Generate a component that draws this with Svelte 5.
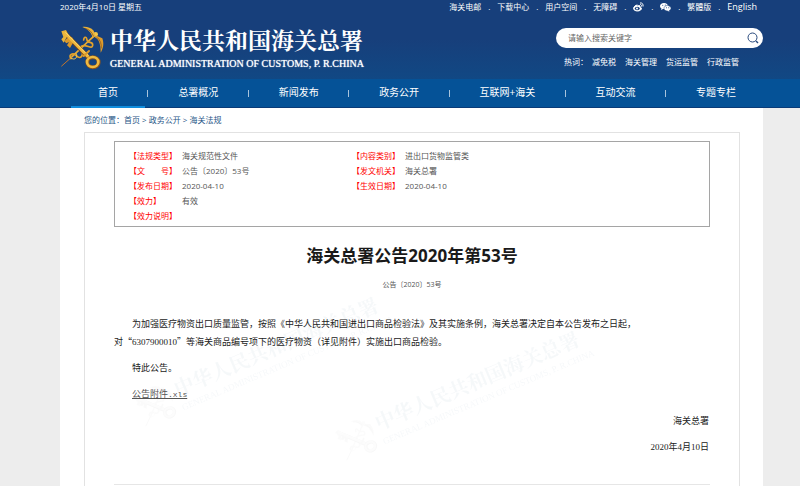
<script lang="ts">
	const navItems = ['首页', '总署概况', '新闻发布', '政务公开', '互联网+海关', '互动交流', '专题专栏'];
	const hotWords = ['减免税', '海关管理', '货运监管', '行政监管'];
	const crumbs = ['首页', '政务公开', '海关法规'];

	const info = [
		['【法规类型】', '海关规范性文件', '【内容类别】', '进出口货物监管类'],
		['【文　　号】', '公告〔2020〕53号', '【发文机关】', '海关总署'],
		['【发布日期】', '2020-04-10', '【生效日期】', '2020-04-10'],
		['【效力】', '有效', '', ''],
		['【效力说明】', '', '', '']
	];

	let keyword = $state('');
</script>

{#snippet emblem()}
	<svg class="emblem" viewBox="20 18 132 132" aria-hidden="true" fill="none" stroke-linecap="round">
		<!-- caduceus -->
		<path d="M25 138 L60 107" stroke="#c4762c" stroke-width="3" />
		<path d="M56 110 L124 46" stroke="#e6aa35" stroke-width="5" />
		<path
			d="M53 116 C45 105 58 97 66 105 S84 117 87 104 S72 84 86 78 S116 90 118 76 S103 72 101 60 S92 50 91 60"
			stroke="#e3a22c"
			stroke-width="5"
		/>
		<path d="M53 114 C64 123 75 112 69 101" stroke="#f5cb55" stroke-width="3" />
		<circle cx="127" cy="43" r="7" fill="#f3c64c" />
		<path d="M118 53 C114 38 106 29 87 21 C98 19 112 22 121 32 L127 49 Z" fill="#e9b23b" />
		<path d="M124 52 C136 56 142 71 142 98 C151 85 152 68 147 55 L130 47 Z" fill="#dd9c2d" />
		<path d="M96 25 C109 29 116 36 120 48 M132 53 C141 60 145 72 144 84" stroke="#7c4c1e" stroke-width="2" />
		<!-- key -->
		<path d="M36 41 L104 111" stroke="#7a461b" stroke-width="13" />
		<path d="M24 34 L38 30 L46 46 L40 52 L31 68 L24 58 L30 51 Z" fill="#eab43a" />
		<path d="M41 55 L56 52 L62 63 L50 84 L41 76 L47 66 L39 70 L33 64 Z" fill="#dc992b" />
		<path d="M35 39 L104 110" stroke="#edb83e" stroke-width="9" />
		<path d="M37 38 L104 106" stroke="#ffe58a" stroke-width="2" />
		<path d="M91 108 L107 93" stroke="#d99a2c" stroke-width="6" />
		<ellipse cx="119" cy="127" rx="17" ry="15" stroke="#8a531d" stroke-width="12" />
		<ellipse cx="118" cy="126" rx="17" ry="15" stroke="#efbb42" stroke-width="8" />
	</svg>
{/snippet}

{#snippet brand()}
	{@render emblem()}
	<span class="names">
		<span class="cn">中华人民共和国海关总署</span>
		<span class="en">GENERAL ADMINISTRATION OF CUSTOMS, P. R.CHINA</span>
	</span>
{/snippet}

<div class="page" lang="zh-CN">
	<header>
		<div class="wrap">
			<div class="topbar">
				<span>2020年4月10日 星期五</span>
				<ul class="links">
					<li><a href="#mail">海关电邮</a></li>
					<li><a href="#download">下载中心</a></li>
					<li><a href="#user">用户空间</a></li>
					<li><a href="#access">无障碍</a></li>
					<li>
						<a href="#weibo" aria-label="微博">
							<svg viewBox="0 0 22 20" fill="none" stroke="currentColor" stroke-width="2">
								<path d="M9 6 C5 6 1 10 1 13 C1 16 5 18 9 18 C14 18 17 15 17 13 C17 11 15 11 14 10 C15 7 12 6 9 8" fill="#fff" />
								<ellipse cx="8.5" cy="13" rx="5" ry="3.5" fill="#173f7b" stroke="none" />
								<circle cx="8" cy="13" r="2" fill="#fff" stroke="none" />
								<path d="M14 2 C18 1 21 4 20 9 M14 5 C16 5 18 6 17 9" />
							</svg>
						</a>
					</li>
					<li>
						<a href="#wechat" aria-label="微信">
							<svg viewBox="0 0 22 20" fill="currentColor">
								<path d="M8 2 C3 2 0 5 0 8 C0 10 1 12 3 13 L2 16 L6 14 C14 15 16 11 16 8 C16 5 13 2 8 2" />
								<path
									d="M15 7 C10 7 8 10 8 12.500 C8 16 11 18 15 18 L19 20 L18.500 17 C21 16 22 14 22 12.500 C22 10 19 7 15 7"
									stroke="#173f7b"
								/>
								<g fill="#173f7b">
									<circle cx="5.500" cy="6.500" r="1" />
									<circle cx="10.500" cy="6" r="1" />
									<circle cx="13" cy="11.500" r="1" />
									<circle cx="17.500" cy="11.500" r="1" />
								</g>
							</svg>
						</a>
					</li>
					<li><a href="#traditional">繁體版</a></li>
					<li><a class="latin" href="#english">English</a></li>
				</ul>
			</div>
			<div class="masthead">
				<a class="brand" href="#home">{@render brand()}</a>
				<div class="tools">
					<form class="search" onsubmit={(e) => e.preventDefault()}>
						<input type="text" aria-label="搜索" placeholder="请输入搜索关键字" bind:value={keyword} />
						<button type="submit" aria-label="搜索">
							<svg viewBox="0 0 12 12" fill="none" stroke="#28497d">
								<circle cx="5.500" cy="5.500" r="4.500" />
								<path d="M9 9 L11 11" stroke-width="1.500" />
							</svg>
						</button>
					</form>
					<p class="hot">
						<span>热词：</span>
						{#each hotWords as word (word)}
							<a href="#search">{word}</a>
						{/each}
					</p>
				</div>
			</div>
		</div>
	</header>

	<nav>
		<ul class="wrap">
			{#each navItems as item, i (item)}
				<li><a href="#nav" class:active={i === 0}>{item}</a></li>
			{/each}
		</ul>
	</nav>

	<main class="wrap">
		<p class="crumbs">
			您的位置：{#each crumbs as crumb, i (crumb)}{i ? ' > ' : ''}<a href="#crumb">{crumb}</a>{/each}
		</p>
		<article>
			<div class="mark first" aria-hidden="true">{@render brand()}</div>
			<div class="mark second" aria-hidden="true">{@render brand()}</div>

			<div class="info">
				<table>
					<tbody>
						{#each info as [label, value, label2, value2] (label)}
							<tr>
								<th scope="row">{label}</th>
								<td>{value}</td>
								<th scope="row">{label2}</th>
								<td>{value2}</td>
							</tr>
						{/each}
					</tbody>
				</table>
			</div>

			<h1>海关总署公告2020年第53号</h1>
			<p class="number">公告〔2020〕53号</p>

			<div class="body">
				<p>
					为加强医疗物资出口质量监管，按照《中华人民共和国进出口商品检验法》及其实施条例，海关总署决定自本公告发布之日起，<br />对“<span class="num">6307900010</span>”等海关商品编号项下的医疗物资（详见附件）实施出口商品检验。
				</p>
				<p>特此公告。</p>
				<p><a href="#attachment">公告附件<span class="ext">.xls</span></a></p>
				<p class="sign">海关总署</p>
				<p class="sign"><span class="num">2020</span>年<span class="num">4</span>月<span class="num">10</span>日</p>
			</div>
			<hr />
		</article>
	</main>
</div>

<style>
	:global(body) {
		margin: 0;
		background: #ededed;
	}

	.page {
		min-height: 100vh;
		display: flex;
		flex-direction: column;
		overflow: hidden;
		font: 8px/12px 'Open Sans', 'Noto Sans CJK SC', sans-serif;
		color: #555;
	}

	.wrap {
		margin: 0 37px 0 60px;
	}

	ul {
		list-style: none;
		padding: 0;
		margin: 0;
	}

	p {
		margin: 0;
	}

	a {
		color: inherit;
		text-decoration: none;
	}

	header {
		background: linear-gradient(#173f7b 50%, #114884);
		color: #fff;
		padding-bottom: 8px;
	}

	.topbar {
		display: flex;
		justify-content: space-between;
		align-items: center;
		height: 14px;
		padding-right: 6px;
	}

	.links {
		display: flex;
	}

	.links li {
		display: flex;
		align-items: center;
	}

	.links li + li::before {
		content: '.';
		width: 16px;
		text-align: center;
	}

	.links svg {
		display: block;
		width: 11px;
		height: 10px;
	}

	.latin {
		font-size: 9px;
	}

	.masthead {
		display: flex;
		justify-content: space-between;
		padding-top: 12px;
	}

	.brand {
		display: flex;
		gap: 6px;
		color: #fff;
		height: 45px;
	}

	.emblem {
		width: 44px;
		height: 44px;
		flex: none;
	}

	.names {
		display: flex;
		flex-direction: column;
		white-space: nowrap;
	}

	.cn {
		font: 700 23px/28px 'Noto Serif CJK SC', 'Noto Sans CJK SC', serif;
	}

	.en {
		font: 400 10px/20px 'Liberation Serif', serif;
		text-shadow: 0 0 1px #fff;
	}

	.tools {
		width: 207px;
		padding-top: 2px;
	}

	.search {
		display: flex;
		align-items: center;
		height: 20px;
		padding: 0 4px 0 12px;
		background: #fff;
		border-radius: 10px;
	}

	.search input {
		flex: 1;
		min-width: 0;
		padding: 0;
		border: 0;
		outline: 0;
		background: none;
		font: inherit;
		color: #555;
	}

	.search input::placeholder {
		color: #666;
	}

	.search button {
		display: flex;
		padding: 0;
		border: 0;
		background: none;
	}

	.search svg {
		width: 12px;
		height: 12px;
	}

	.hot {
		display: flex;
		gap: 9px;
		margin: 8px 0 0 8px;
	}

	.hot span {
		margin-right: -5px;
	}

	nav {
		background: #055297;
		box-shadow: inset 0 -1px #0a3b78;
		color: #fff;
		font-size: 10px;
	}

	nav ul {
		display: flex;
		justify-content: space-between;
		padding-left: 11px;
	}

	nav li {
		display: flex;
		align-items: center;
	}

	nav li + li::before {
		content: '';
		width: 1px;
		height: 7px;
		margin-right: 3px;
		background: #a9c4dc;
	}

	nav a {
		padding: 0 27px;
		line-height: 27px;
		border-bottom: 2px solid transparent;
		white-space: nowrap;
	}

	nav a.active {
		border-color: #118ddd;
	}

	main {
		flex: 1;
		display: flex;
		flex-direction: column;
		padding: 0 23px 0 24px;
		background: #fff;
	}

	.crumbs {
		line-height: 24px;
		color: #1f5687;
	}

	article {
		position: relative;
		flex: 1;
		padding: 8px 29px 0;
		border: 1px solid #e2e2e2;
		border-bottom: 0;
		z-index: 0;
	}

	.mark {
		position: absolute;
		z-index: -1;
		display: flex;
		gap: 4px;
		color: #2d5f88;
		opacity: 0.04;
		transform: rotate(-23deg);
		transform-origin: 0 50%;
	}

	.mark .emblem {
		width: 38px;
		height: 38px;
		filter: grayscale(1);
	}

	.mark .cn {
		font-size: 20px;
		line-height: 24px;
	}

	.mark .en {
		font-size: 9px;
		line-height: 16px;
		text-shadow: none;
	}

	.first {
		left: 54px;
		top: 260px;
	}

	.second {
		left: 255px;
		top: 294px;
	}

	.info {
		padding: 6px 14px 3px;
		border: 1px solid #a5a5a5;
	}

	table {
		width: 100%;
		table-layout: fixed;
		border-collapse: collapse;
	}

	th,
	td {
		height: 15px;
		padding: 0;
		line-height: 15px;
		text-align: left;
		font-weight: 400;
	}

	th {
		width: 53px;
		color: #f00;
	}

	td:nth-child(2) {
		width: 170px;
	}

	h1 {
		margin: 17px 0 0;
		font-size: 17px;
		line-height: 24px;
		text-align: center;
		color: #1a1a1a;
	}

	.number {
		margin-top: 11px;
		font-size: 7px;
		text-align: center;
	}

	.body {
		margin-top: 24px;
		font-size: 9px;
		line-height: 18px;
		color: #222;
	}

	.body p {
		margin-bottom: 8px;
		padding-right: 1px;
		text-indent: 18px;
		font-family: 'Noto Sans CJK SC', sans-serif;
	}

	.body a {
		color: #555;
		text-decoration: underline;
	}

	.num {
		font-family: 'Liberation Serif', serif;
	}

	.ext {
		font-family: 'Liberation Mono', monospace;
		font-size: 8px;
	}

	.body .sign {
		text-align: right;
	}

	hr {
		margin: 28px 0 0;
		border: 0;
		border-top: 1px solid #e6e6e6;
	}
</style>
